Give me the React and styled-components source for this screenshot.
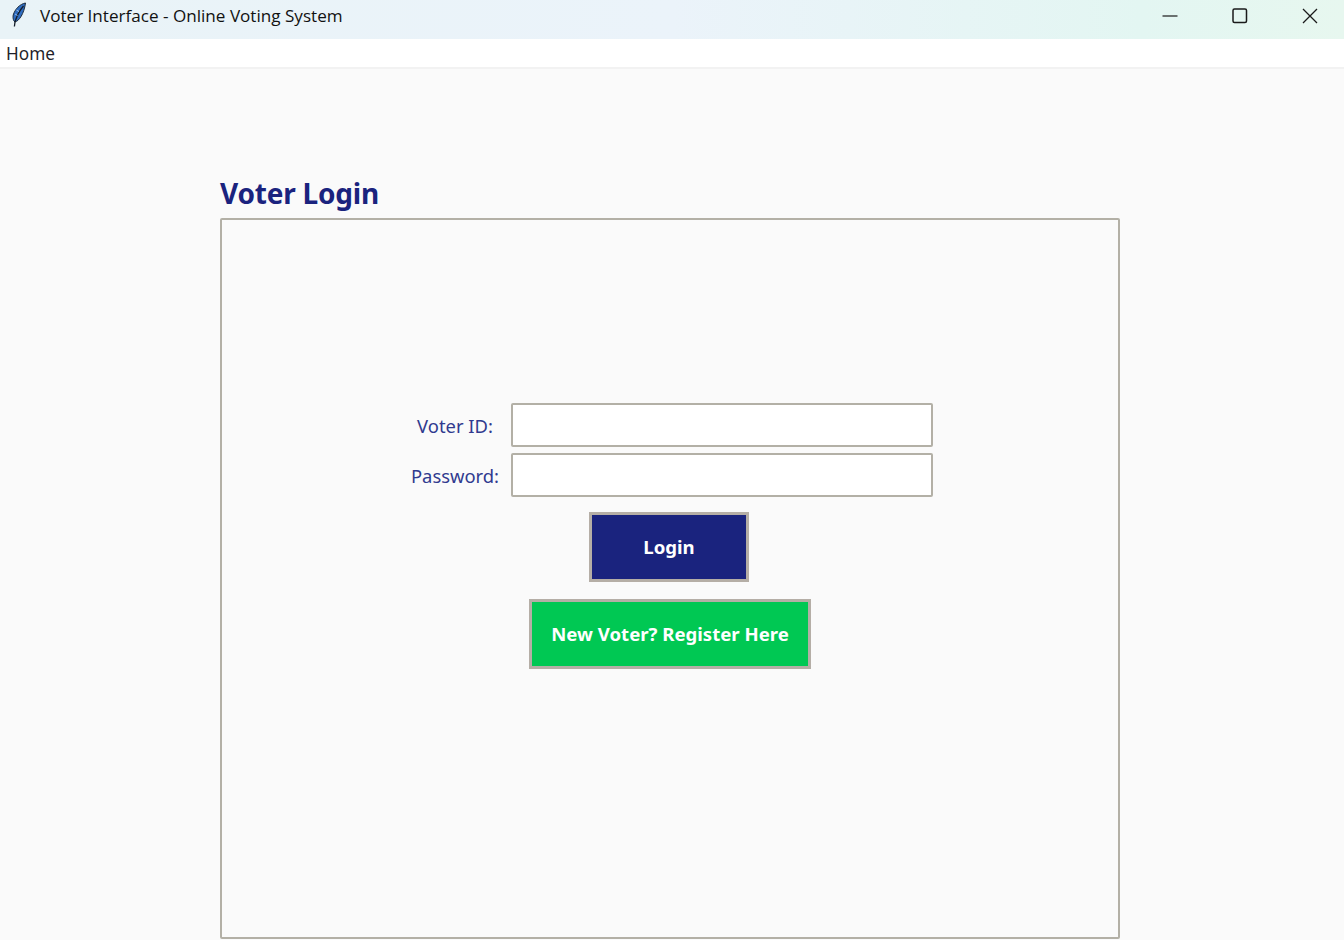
import React from "react";
import styled, { createGlobalStyle } from "styled-components";

const GlobalStyle = createGlobalStyle`
  html, body {
    margin: 0;
    padding: 0;
    height: 100%;
    overflow: hidden;
    background: #fafafa;
  }
`;

const Window = styled.div`
  width: 1344px;
  height: 940px;
  display: flex;
  flex-direction: column;
  overflow: hidden;
  background: #fafafa;
  font-family: "Noto Sans", "Open Sans", sans-serif;
`;

const TitleBar = styled.div`
  flex: 0 0 39px;
  display: flex;
  align-items: center;
  background: linear-gradient(90deg, #e9f3f7 0%, #ebf3fa 50%, #e3f6f2 85%, #e7f7ef 100%);
`;

const AppIcon = styled.svg`
  width: 18px;
  height: 26px;
  margin-left: 10px;
  margin-right: 12px;
  margin-top: -12px;
`;

const WindowTitle = styled.span`
  flex: 1;
  font-family: "Open Sans", "Noto Sans", sans-serif;
  font-size: 17.1px;
  color: #111;
  margin-top: -9px;
`;

const WindowControls = styled.div`
  display: flex;
  align-items: center;
  height: 100%;
  margin-top: -8px;
  margin-right: -1px;
`;

const ControlButton = styled.div`
  width: 70px;
  height: 31px;
  display: flex;
  align-items: center;
  justify-content: center;
  svg {
    width: 16px;
    height: 16px;
    stroke: #1a1a1a;
    fill: none;
  }
`;

const MenuBar = styled.div`
  flex: 0 0 28px;
  display: flex;
  align-items: center;
  background: #fff;
  border-bottom: 2px solid #f2f2f2;
`;

const MenuItem = styled.span`
  margin-left: 6px;
  font-size: 17.2px;
  color: #1f1f2a;
`;

const Content = styled.main`
  flex: 1;
  padding: 106px 0 0 220px;
  min-height: 0;
`;

const Heading = styled.h1`
  margin: 0 0 6px;
  font-size: 28px;
  line-height: 37px;
  font-weight: 700;
  color: #1a237e;
  letter-spacing: -0.2px;
`;

const Panel = styled.section`
  box-sizing: border-box;
  width: 900px;
  height: 721px;
  padding-top: 183px;
  display: flex;
  flex-direction: column;
  align-items: center;
  border: 2px solid #b3b0a6;
  border-radius: 2px;
  background: #fafafa;
`;

const LoginForm = styled.form`
  display: grid;
  grid-template-columns: 100px 422px;
  column-gap: 6px;
  row-gap: 6px;
  align-items: center;
  margin: 0 2px 15px 0;
`;

const FieldLabel = styled.label`
  text-align: center;
  font-size: 18.4px;
  color: #303a8f;
`;

const TextInput = styled.input`
  box-sizing: border-box;
  width: 422px;
  height: 44px;
  border: 2px solid #b3b0a6;
  border-radius: 2px;
  background: #fff;
  outline: none;
`;

const ActionButton = styled.button`
  box-sizing: border-box;
  width: ${(p) => p.$width}px;
  height: 70px;
  margin: 0 ${(p) => p.$shift || 0}px 17px 0;
  border: 3px solid #b5aea6;
  background: ${(p) => p.$bg};
  color: #fff;
  font-family: inherit;
  font-size: 18.6px;
  font-weight: 700;
  padding: 0 0 2px;
`;

const Feather = () => (
  <AppIcon viewBox="0 0 18 26">
    <path d="M15.5 2 C10 3 5 8 3.2 14 C2.6 17 3.4 20 5 21 C9 20 14 13 15.5 2 Z" fill="#2f6cc0" stroke="#1b2a3c" strokeWidth="1" />
    <path d="M13.5 5 C10 9 7 14 5 21 L4.4 25.5" fill="none" stroke="#141c28" strokeWidth="1.3" />
    <path d="M6.5 9 L9 10.5 M5 13 L7.5 14.5" stroke="#9cc4ee" strokeWidth="0.9" />
  </AppIcon>
);

export default function App() {
  return (
    <Window>
      <GlobalStyle />
      <TitleBar>
        <Feather />
        <WindowTitle>Voter Interface - Online Voting System</WindowTitle>
        <WindowControls>
          <ControlButton>
            <svg viewBox="0 0 16 16"><path d="M0.5 8 H15.5" strokeWidth="1.2" /></svg>
          </ControlButton>
          <ControlButton>
            <svg viewBox="0 0 16 16"><rect x="1" y="1" width="13.5" height="13.5" rx="1.5" strokeWidth="1.5" /></svg>
          </ControlButton>
          <ControlButton>
            <svg viewBox="0 0 16 16"><path d="M1 1 L15 15 M15 1 L1 15" strokeWidth="1.3" /></svg>
          </ControlButton>
        </WindowControls>
      </TitleBar>
      <MenuBar>
        <MenuItem>Home</MenuItem>
      </MenuBar>
      <Content>
        <Heading>Voter Login</Heading>
        <Panel>
          <LoginForm>
            <FieldLabel htmlFor="voter-id">Voter ID:</FieldLabel>
            <TextInput id="voter-id" type="text" />
            <FieldLabel htmlFor="password">Password:</FieldLabel>
            <TextInput id="password" type="password" />
          </LoginForm>
          <ActionButton type="button" $width={160} $shift={2} $bg="#1a237e">Login</ActionButton>
          <ActionButton type="button" $width={282} $bg="#00c853">New Voter? Register Here</ActionButton>
        </Panel>
      </Content>
    </Window>
  );
}
